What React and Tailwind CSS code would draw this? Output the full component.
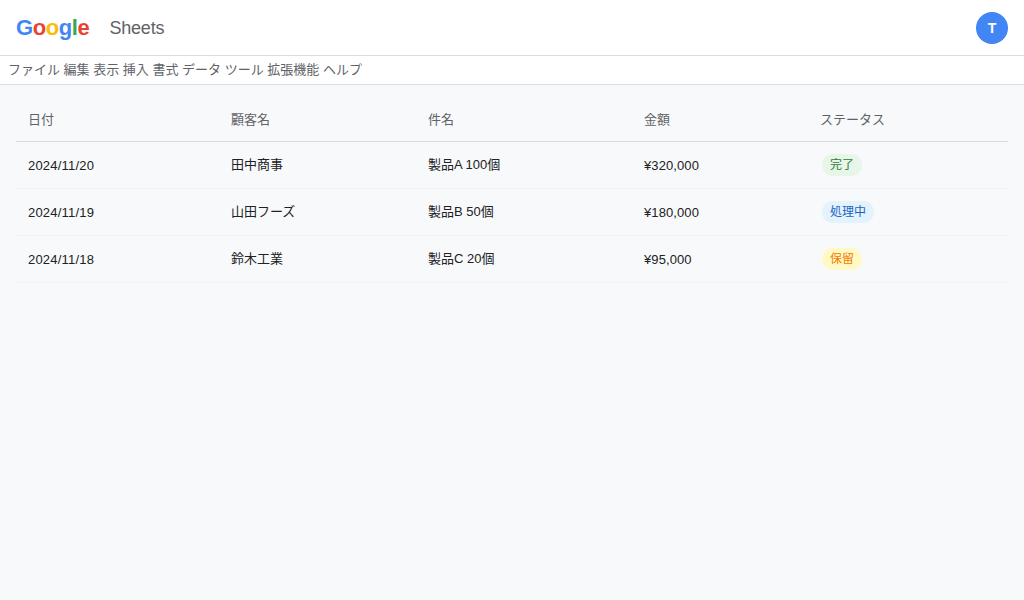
const rows = [
  { date: "2024/11/20", name: "田中商事", subject: "製品A 100個", amount: "¥320,000", status: "完了", badge: "bg-[#e8f5e9] text-[#2e7d32]" },
  { date: "2024/11/19", name: "山田フーズ", subject: "製品B 50個", amount: "¥180,000", status: "処理中", badge: "bg-[#e3f2fd] text-[#1565c0]" },
  { date: "2024/11/18", name: "鈴木工業", subject: "製品C 20個", amount: "¥95,000", status: "保留", badge: "bg-[#fff9c4] text-[#f57c00]" },
];
const menus = ["ファイル", "編集", "表示", "挿入", "書式", "データ", "ツール", "拡張機能", "ヘルプ"];
const heads = [
  ["日付", "w-[203px]"],
  ["顧客名", "w-[197px]"],
  ["件名", "w-[216px]"],
  ["金額", "w-[176px]"],
  ["ステータス", "w-[200px]"],
];

export default function App() {
  return (
    <div className="h-[600px] overflow-hidden bg-[#f8f9fa] font-['Liberation_Sans','Noto_Sans_CJK_JP',sans-serif]">
      <header className="h-14 bg-white border-b border-[#dadce0] flex items-center justify-between px-4">
        <div className="flex items-center">
          <span className="text-[22px] font-bold tracking-[-0.4px] leading-none">
            <span className="text-[#4285f4]">G</span>
            <span className="text-[#ea4335]">o</span>
            <span className="text-[#fbbc05]">o</span>
            <span className="text-[#4285f4]">g</span>
            <span className="text-[#34a853]">l</span>
            <span className="text-[#ea4335]">e</span>
          </span>
          <span className="ml-5 text-lg tracking-[-0.2px] text-[#5f6368]">Sheets</span>
        </div>
        <div className="w-8 h-8 rounded-full bg-[#4285f4] text-white text-sm font-bold flex items-center justify-center">T</div>
      </header>
      <nav className="h-[29px] bg-white border-b border-[#dadce0] flex items-center gap-[3.6px] px-2 text-[13px] text-[#5f6368]">
        {menus.map((m) => (
          <span key={m}>{m}</span>
        ))}
      </nav>
      <main className="px-4 pt-3">
        <table className="w-full table-fixed border-collapse text-[13px]">
          <thead>
            <tr className="h-[44px] border-b border-[#dadce0]">
              {heads.map(([h, w]) => (
                <th key={h} className={`${w} px-3 pt-[2px] text-left font-normal text-[#5f6368]`}>{h}</th>
              ))}
            </tr>
          </thead>
          <tbody>
            {rows.map((r) => (
              <tr key={r.date} className="h-[47px] border-b border-[#f1f3f4] text-[#202124]">
                <td className="px-3 pt-[2px] tracking-[0.2px]">{r.date}</td>
                <td className="px-3">{r.name}</td>
                <td className="px-3">{r.subject}</td>
                <td className="px-3 pt-[2px] tracking-[0.1px]">{r.amount}</td>
                <td className="px-3">
                  <span className={`inline-block ml-0.5 rounded-xl px-2 py-[3px] text-xs leading-4 ${r.badge}`}>{r.status}</span>
                </td>
              </tr>
            ))}
          </tbody>
        </table>
      </main>
    </div>
  );
}
